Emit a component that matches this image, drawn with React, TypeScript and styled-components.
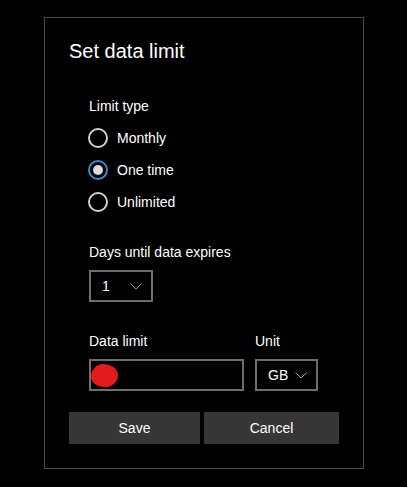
import React from "react";
import styled, { createGlobalStyle } from "styled-components";

const GlobalStyle = createGlobalStyle`
  html, body {
    margin: 0;
    padding: 0;
    background: #000;
  }
  body {
    font-family: "Liberation Sans", Arial, sans-serif;
    color: #fff;
  }
`;

const Page = styled.div`
  width: 407px;
  height: 487px;
  padding: 17px 0 0 44px;
  box-sizing: border-box;
  background: #000;
`;

const Dialog = styled.div`
  width: 320px;
  height: 452px;
  box-sizing: border-box;
  border: 1px solid #4a4a4a;
  padding: 21px 23px 0 24px;
  display: flex;
  flex-direction: column;
`;

const Title = styled.div`
  font-size: 20px;
  line-height: 24px;
  color: #fff;
  margin-bottom: 33px;
`;

const Body = styled.div`
  padding-left: 20px;
  display: flex;
  flex-direction: column;
`;

const Label = styled.div<{ $gap?: number }>`
  font-size: 14px;
  line-height: 20px;
  color: #fff;
  margin-bottom: ${(p) => p.$gap ?? 8}px;
`;

const RadioGroup = styled.div`
  display: flex;
  flex-direction: column;
  margin-bottom: 24px;
`;

const RadioRow = styled.label`
  display: flex;
  align-items: center;
  height: 32px;
  gap: 9px;
  font-size: 14px;
  color: #fff;
`;

const RadioCircle = styled.span<{ $checked?: boolean }>`
  width: 20px;
  height: 20px;
  box-sizing: border-box;
  border-radius: 50%;
  border: 2px solid ${(p) => (p.$checked ? "#3a8cc6" : "#cfcfcf")};
  display: flex;
  align-items: center;
  justify-content: center;
  margin-left: -1px;

  &::after {
    content: "";
    display: ${(p) => (p.$checked ? "block" : "none")};
    width: 10px;
    height: 10px;
    border-radius: 50%;
    background: #dcdcdc;
  }
`;

const Select = styled.div<{ $width: number }>`
  width: ${(p) => p.$width}px;
  height: 32px;
  box-sizing: border-box;
  border: 2px solid #6e6e6e;
  display: flex;
  align-items: center;
  justify-content: space-between;
  padding: 0 9px 0 11px;
  font-size: 14px;
  color: #fff;
`;

const Chevron = () => (
  <svg width="12" height="7" viewBox="0 0 12 7" fill="none">
    <path d="M0.5 0.5 L6 6 L11.5 0.5" stroke="#a0a0a0" strokeWidth="1" />
  </svg>
);

const FieldRow = styled.div`
  display: flex;
  gap: 11px;
  margin-top: 29px;
`;

const Field = styled.div`
  display: flex;
  flex-direction: column;
`;

const TextInput = styled.div`
  width: 155px;
  height: 32px;
  box-sizing: border-box;
  border: 2px solid #6e6e6e;
  display: flex;
  align-items: center;
`;

const Redaction = styled.span`
  width: 27px;
  height: 23px;
  background: #e41b1d;
  border-radius: 45% 55% 50% 50% / 55% 50% 50% 45%;
`;

const Buttons = styled.div`
  display: grid;
  grid-template-columns: 131px 135px;
  gap: 4px;
  margin-top: 21px;
`;

const Button = styled.button`
  height: 32px;
  border: none;
  background: #363636;
  color: #fff;
  font-family: "Liberation Sans", Arial, sans-serif;
  font-size: 14px;
  padding: 0;
`;

const options = ["Monthly", "One time", "Unlimited"];

export default function App() {
  return (
    <Page>
      <GlobalStyle />
      <Dialog>
        <Title>Set data limit</Title>
        <Body>
          <Label $gap={6}>Limit type</Label>
          <RadioGroup>
            {options.map((o) => (
              <RadioRow key={o}>
                <RadioCircle $checked={o === "One time"} />
                {o}
              </RadioRow>
            ))}
          </RadioGroup>
          <Label>Days until data expires</Label>
          <Select $width={64}>
            <span>1</span>
            <Chevron />
          </Select>
          <FieldRow>
            <Field>
              <Label>Data limit</Label>
              <TextInput>
                <Redaction />
              </TextInput>
            </Field>
            <Field>
              <Label>Unit</Label>
              <Select $width={63}>
                <span>GB</span>
                <Chevron />
              </Select>
            </Field>
          </FieldRow>
        </Body>
        <Buttons>
          <Button>Save</Button>
          <Button>Cancel</Button>
        </Buttons>
      </Dialog>
    </Page>
  );
}
